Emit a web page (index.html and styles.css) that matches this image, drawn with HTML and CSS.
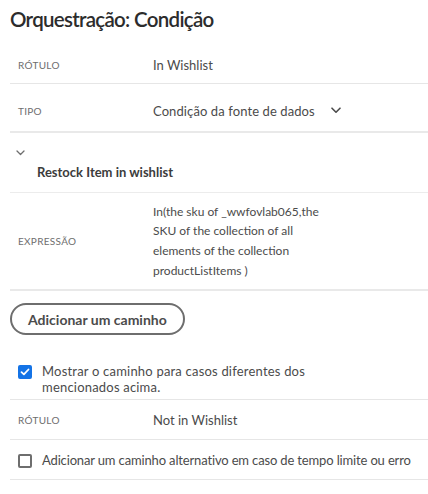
FILE: index.html
```html
<!DOCTYPE html>
<html lang="pt">
<head>
<meta charset="utf-8">
<title>Orquestração: Condição</title>
<link rel="stylesheet" href="styles.css">
</head>
<body>
<div class="panel">
  <h1 class="title">Orquestração: Condição</h1>

  <div class="row row-first">
    <div class="label">Rótulo</div>
    <div class="value">In Wishlist</div>
  </div>
  <div class="row row-type">
    <div class="label">Tipo</div>
    <div class="value select">Condição da fonte de dados
      <svg class="chev" width="10" height="7" viewBox="0 0 10 7"><path d="M1 1.2 L5 5.2 L9 1.2" fill="none" stroke="#4b4b4b" stroke-width="1.6" stroke-linecap="round" stroke-linejoin="round"/></svg>
    </div>
  </div>

  <div class="group">
    <svg class="small-chev" width="9" height="6" viewBox="0 0 9 6"><path d="M1 1 L4.5 4.5 L8 1" fill="none" stroke="#6e6e6e" stroke-width="1.3" stroke-linecap="round" stroke-linejoin="round"/></svg>
    <div class="group-name">Restock Item in wishlist</div>
  </div>

  <div class="row row-expr">
    <div class="label">Expressão</div>
    <div class="value expr">In(the sku of _wwfovlab065,the SKU of the collection of all elements of the collection productListItems )</div>
  </div>

  <div class="actions">
    <button class="pill">Adicionar um caminho</button>
  </div>

  <div class="check-row check-other">
    <span class="box checked"><svg width="10" height="8" viewBox="0 0 10 8"><path d="M1.5 4.2 L3.9 6.4 L8.5 1.5" fill="none" stroke="#fff" stroke-width="1.8" stroke-linecap="round" stroke-linejoin="round"/></svg></span>
    <span class="check-text wide">Mostrar o caminho para casos diferentes dos<br>mencionados acima.</span>
  </div>

  <div class="row row-not">
    <div class="label">Rótulo</div>
    <div class="value">Not in Wishlist</div>
  </div>

  <div class="check-row check-alt">
    <span class="box"></span>
    <span class="check-text narrow">Adicionar um caminho alternativo em caso de tempo limite ou erro</span>
  </div>
</div>
</body>
</html>
```

FILE: styles.css
```css
* { box-sizing: border-box; }
html, body { margin: 0; padding: 0; background: #fff; }
body {
  font-family: Lato, "Noto Sans", sans-serif;
  color: #4b4b4b;
}
.panel {
  padding: 0 0 0 10px;
  width: 428px;
}
.title {
  margin: 0;
  padding-top: 7px;
  height: 46px;
  font-size: 20.5px;
  font-weight: 600;
  color: #2c2c2c;
  letter-spacing: -0.7px;
}
.row {
  display: flex;
  align-items: center;
  border-bottom: 1px solid #e6e6e6;
}
.label {
  width: 143px;
  padding-left: 8px;
  font-size: 10px;
  text-transform: uppercase;
  letter-spacing: 0.3px;
  color: #6e6e6e;
}
.value {
  font-size: 13px;
  color: #4b4b4b;
}
.row-first { height: 38px; }
.row-type { height: 49px; padding-top: 6px; border-bottom: 2px solid #e9e9e9; }
.select { display: flex; align-items: center; gap: 14px; letter-spacing: 0.1px; }
.chev { margin-left: 2px; }
.group {
  height: 60px;
  border-bottom: 1px solid #ececec;
  padding-top: 17px;
}
.small-chev { display: block; margin-left: 6px; }
.group-name {
  margin-top: 8px;
  padding-left: 27px;
  font-size: 13px;
  font-weight: 700;
  color: #3c3c3c;
}
.row-expr {
  height: 98px;
  border-bottom: 2px solid #e9e9e9;
}
.expr {
  width: 190px;
  font-size: 12px;
  line-height: 19.6px;
}
.actions { padding: 12px 0 0 0; height: 62px; }
.pill {
  font-family: inherit;
  height: 32px;
  padding: 0 16px;
  border: 2px solid #6e6e6e;
  border-radius: 16px;
  background: #fff;
  font-size: 14px;
  font-weight: 700;
  color: #4b4b4b;
}
.check-row {
  display: flex;
  align-items: flex-start;
  gap: 10px;
  padding-left: 8px;
  border-bottom: 1px solid #e6e6e6;
  font-size: 13px;
}
.check-other { height: 47px; padding-top: 10px; }
.check-text { line-height: 16px; }
.check-text.wide { letter-spacing: 0.2px; }
.check-text.narrow { letter-spacing: -0.15px; }
.box {
  flex: none;
  width: 14px;
  height: 14px;
  border-radius: 2px;
  border: 2px solid #6e6e6e;
  margin-top: 2px;
  display: flex;
  align-items: center;
  justify-content: center;
}
.box.checked { background: #1473e6; border-color: #1473e6; }
.row-not { height: 40px; }
.check-alt { height: 40px; padding-top: 12px; }
```
